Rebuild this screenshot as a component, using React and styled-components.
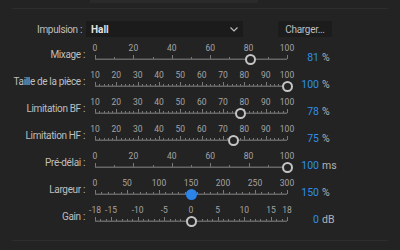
import React from "react";
import styled, { createGlobalStyle } from "styled-components";

const GlobalStyle = createGlobalStyle`
  body {
    margin: 0;
    background: #232323;
    font-family: Roboto, "Liberation Sans", sans-serif;
    -webkit-font-smoothing: antialiased;
  }
`;

const Panel = styled.div`
  width: 400px;
  height: 250px;
  background: #232323;
  overflow: hidden;
`;

const TopStub = styled.div`
  margin-left: 90px;
  width: 168px;
  height: 3px;
  background: #2a2a2a;
`;

const Divider = styled.div`
  margin: ${p => p.$top || 0}px 12px 0;
  height: 1px;
  background: #2e2e2e;
`;

const Form = styled.div`
  padding-top: 12px;
  display: flex;
  flex-direction: column;
`;

const ImpulseRow = styled.div`
  display: flex;
  align-items: center;
  height: 16px;
  margin-bottom: 6px;
`;

const Label = styled.div`
  width: ${p => p.$width || 85}px;
  flex: none;
  text-align: right;
  font-size: 10px;
  letter-spacing: -0.35px;
  line-height: 13px;
  color: #bfbfbf;
  white-space: nowrap;
  align-self: ${p => (p.$top ? "flex-start" : "center")};
  margin-top: ${p => p.$top || 0}px;
`;

const Select = styled.div`
  margin-left: 4px;
  width: 157px;
  height: 16px;
  box-sizing: border-box;
  padding: 0 5px;
  display: flex;
  align-items: center;
  justify-content: space-between;
  background: #1b1b1b;
  color: #e2e2e2;
  font-weight: bold;
  font-size: 10px;
`;

const Button = styled.div`
  margin-left: 35px;
  width: 54px;
  height: 16px;
  display: flex;
  align-items: center;
  justify-content: center;
  background: #1c1c1c;
  color: #bdbdbd;
  font-size: 10px;
  letter-spacing: -0.3px;
`;

const SliderRow = styled.div`
  display: flex;
  height: 27px;
`;

const SliderBox = styled.div`
  position: relative;
  width: 192px;
  margin: 0 5px 0 10px;
  height: 27px;
`;

const Scale = styled.div`
  position: relative;
  height: 10px;
`;

const ScaleNum = styled.span`
  position: absolute;
  top: 0;
  transform: translateX(-50%);
  font-size: 8.5px;
  line-height: 10px;
  color: #a4a4a4;
  white-space: nowrap;
`;

const Ruler = styled.svg`
  display: block;
  overflow: visible;
`;

const Thumb = styled.div`
  position: absolute;
  top: 11px;
  width: 11px;
  height: 11px;
  margin-left: -5.5px;
  box-sizing: border-box;
  border-radius: 50%;
  background: ${p => (p.$accent ? "#2b84e8" : "#232323")};
  border: ${p => (p.$accent ? "none" : "2px solid #c4c4c4")};
`;

const Value = styled.div`
  display: flex;
  align-items: center;
  align-self: flex-start;
  margin-top: 8px;
  font-size: 10.5px;
  line-height: 13px;
  white-space: nowrap;
`;

const Num = styled.span`
  width: 27px;
  text-align: right;
  color: #2f8fe6;
`;

const Unit = styled.span`
  margin-left: 3px;
  color: #b3b3b3;
`;

const Chevron = () => (
  <svg width="8" height="5" viewBox="0 0 8 5">
    <polyline points="0.5,0.5 4,4 7.5,0.5" fill="none" stroke="#bcbcbc" strokeWidth="1.2" />
  </svg>
);

const rows = [
  { label: "Mixage :", min: 0, max: 100, labels: [0, 20, 40, 60, 80, 100], step: 10, major: 20, value: 81, unit: "%" },
  { label: "Taille de la pièce :", min: 10, max: 100, labels: [10, 20, 30, 40, 50, 60, 70, 80, 90, 100], step: 2, major: 10, value: 100, unit: "%" },
  { label: "Limitation BF :", min: 10, max: 100, labels: [10, 20, 30, 40, 50, 60, 70, 80, 90, 100], step: 2, major: 10, value: 78, unit: "%" },
  { label: "Limitation HF :", min: 10, max: 100, labels: [10, 20, 30, 40, 50, 60, 70, 80, 90, 100], step: 2, major: 10, value: 75, unit: "%" },
  { label: "Pré-délai :", min: 0, max: 100, labels: [0, 20, 40, 60, 80, 100], step: 10, major: 20, value: 100, unit: "ms" },
  { label: "Largeur :", min: 0, max: 300, labels: [0, 50, 100, 150, 200, 250, 300], step: 10, major: 50, value: 150, unit: "%", accent: true },
  { label: "Gain :", min: -18, max: 18, labels: [-18, -15, -10, -5, 0, 5, 10, 15, 18], step: 1, major: 5, value: 0, unit: "dB" },
];

const W = 192;

const Slider = ({ min, max, labels, step, major, value, accent }) => {
  const pos = v => ((v - min) / (max - min)) * W;
  const ticks = [];
  for (let v = min; v <= max + 1e-6; v += step) {
    const big = v % major === 0 || v === min || v === max;
    ticks.push({ x: Math.round(pos(v)) + 0.5, big });
  }
  return (
    <SliderBox>
      <Scale>
        {labels.map(l => (
          <ScaleNum key={l} style={{ left: pos(l) }}>{l}</ScaleNum>
        ))}
      </Scale>
      <Ruler width={W} height={8}>
        {ticks.map((t, i) => (
          <line key={i} x1={t.x} x2={t.x} y1={t.big ? 2 : 4} y2={6} stroke="#7a7a7a" strokeWidth="1" />
        ))}
        <rect x="0" y="5.5" width={W} height="1.5" fill="#666" />
      </Ruler>
      <Thumb $accent={accent} style={{ left: pos(value) }} />
    </SliderBox>
  );
};

export default function App() {
  return (
    <Panel>
      <GlobalStyle />
      <TopStub />
      <Divider $top={5} />
      <Form>
        <ImpulseRow>
          <Label $width={82}>Impulsion :</Label>
          <Select>
            <span>Hall</span>
            <Chevron />
          </Select>
          <Button>Charger...</Button>
        </ImpulseRow>
        {rows.map(r => (
          <SliderRow key={r.label}>
            <Label $top={5}>{r.label}</Label>
            <Slider {...r} />
            <Value>
              <Num>{r.value}</Num>
              <Unit>{r.unit}</Unit>
            </Value>
          </SliderRow>
        ))}
      </Form>
      <Divider $top={8} />
    </Panel>
  );
}
